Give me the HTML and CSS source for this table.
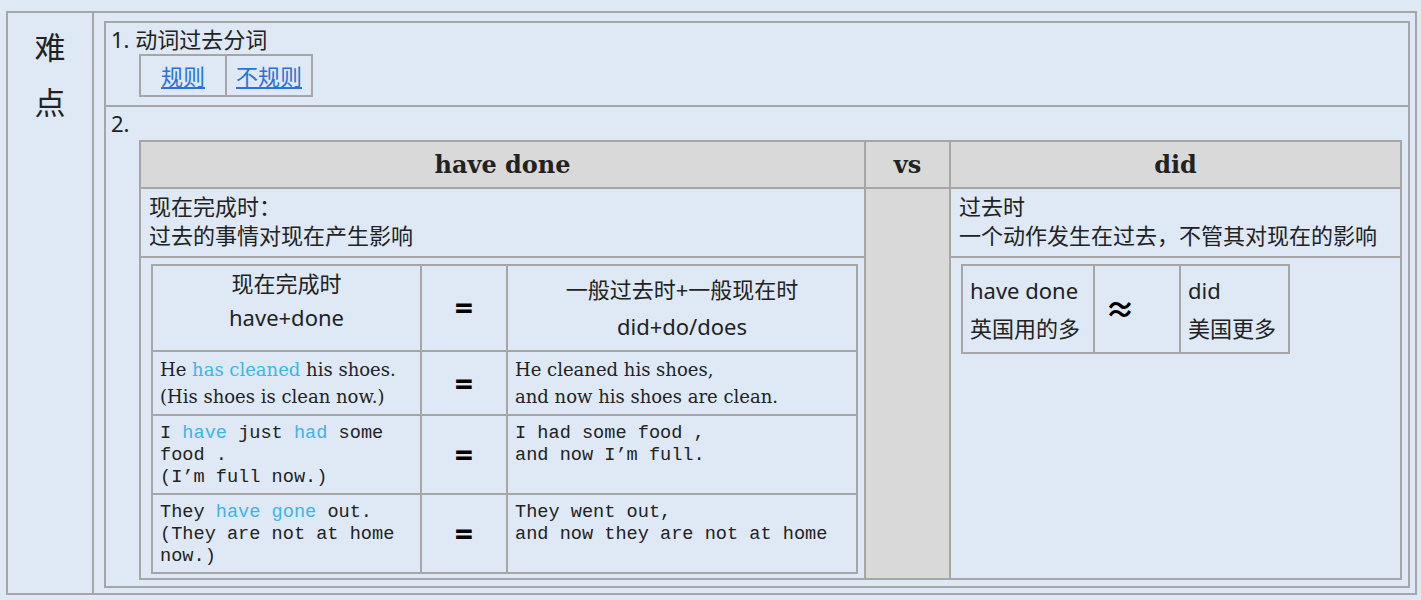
FILE: index.html
```html
<!DOCTYPE html>
<html lang="zh-CN">
<head>
  <meta charset="UTF-8">
  <meta name="viewport" content="width=device-width, initial-scale=1.0">
  <title>难点</title>
  <link rel="stylesheet" href="styles.css">
</head>
<body>
  <table class="outer">
    <tr>
      <td class="label">难<br>点</td>
      <td class="content">
        <table class="points">
          <tr class="point-one">
            <td>
              1. 动词过去分词
              <table class="links">
                <tr>
                  <td><a href="#">规则</a></td>
                  <td><a href="#">不规则</a></td>
                </tr>
              </table>
            </td>
          </tr>
          <tr class="point-two">
            <td>
              2.
              <table class="compare">
                <colgroup>
                  <col style="width: 725px">
                  <col style="width: 85px">
                  <col style="width: 451px">
                </colgroup>
                <tr class="head">
                  <th>have done</th>
                  <th>vs</th>
                  <th>did</th>
                </tr>
                <tr class="desc">
                  <td>现在完成时：<br>过去的事情对现在产生影响</td>
                  <td class="gap" rowspan="2"></td>
                  <td>过去时<br>一个动作发生在过去，不管其对现在的影响</td>
                </tr>
                <tr class="detail">
                  <td>
                    <table class="examples">
                      <colgroup>
                        <col style="width: 269px">
                        <col style="width: 86px">
                        <col style="width: 350px">
                      </colgroup>
                      <tr class="formula">
                        <td class="left-formula">现在完成时<br>have+done</td>
                        <td class="eq">=</td>
                        <td class="right-formula">一般过去时+一般现在时<br>did+do/does</td>
                      </tr>
                      <tr class="serif-row">
                        <td>He <span class="hl">has cleaned</span> his shoes.<br>(His shoes is clean now.)</td>
                        <td class="eq">=</td>
                        <td>He cleaned his shoes,<br>and now his shoes are clean.</td>
                      </tr>
                      <tr class="mono-row">
                        <td>I <span class="hl">have</span> just <span class="hl">had</span> some food .<br>(I’m full now.)</td>
                        <td class="eq">=</td>
                        <td>I had some food ,<br>and now I’m full.</td>
                      </tr>
                      <tr class="mono-row">
                        <td>They <span class="hl">have gone</span> out.<br>(They are not at home now.)</td>
                        <td class="eq">=</td>
                        <td>They went out,<br>and now they are not at home</td>
                      </tr>
                    </table>
                  </td>
                  <td>
                    <table class="usage">
                      <colgroup>
                        <col style="width: 132px">
                        <col style="width: 86px">
                        <col style="width: 109px">
                      </colgroup>
                      <tr>
                        <td>have done<br>英国用的多</td>
                        <td class="approx">≈</td>
                        <td>did<br>美国更多</td>
                      </tr>
                    </table>
                  </td>
                </tr>
              </table>
            </td>
          </tr>
        </table>
      </td>
    </tr>
  </table>
</body>
</html>
```

FILE: styles.css
```css
* {
  box-sizing: border-box;
}

body {
  margin: 0;
  background: #dee9f5;
  font-family: "Noto Sans", "Noto Sans CJK SC", sans-serif;
  font-size: 22px;
  color: #222;
}

table {
  border-collapse: collapse;
}

td, th {
  border: 2px solid #a6a6a6;
  padding: 0;
}

.outer {
  margin: 11px 0 0 6px;
  width: 1411px;
}

.label {
  width: 86px;
  vertical-align: top;
  text-align: center;
  font-size: 31px;
  line-height: 55px;
  padding-top: 7px;
}

.content {
  vertical-align: top;
  padding: 8px 5px 5px 10px;
}

.points {
  width: 100%;
}

.points > tbody > tr > td {
  vertical-align: top;
  padding: 4px 5px 7px;
  line-height: 24px;
}

.point-one {
  height: 84px;
}

.point-two > td {
  padding-top: 3px !important;
  padding-bottom: 6px !important;
  line-height: 26px !important;
}

/* 规则 / 不规则 */
.links {
  margin: 3px 0 0 28px;
}

.links td {
  width: 86px;
  height: 41px;
  text-align: center;
  vertical-align: middle;
}

.links a {
  color: #2a72d8;
}

/* 对比表 */
.compare {
  margin: 4px 0 0 28px;
  width: 1261px;
  table-layout: fixed;
}

.compare th {
  background: #d9d9d9;
  height: 47px;
  font-family: "DejaVu Serif", serif;
  font-size: 24px;
  font-weight: bold;
  line-height: 30px;
}

.desc td {
  height: 69px;
  padding: 2px 8px 6px;
  line-height: 29px;
  vertical-align: middle;
}

.compare .gap {
  background: #d9d9d9;
}

.detail > td {
  vertical-align: top;
  padding: 6px 8px 4px 10px;
}

.examples {
  width: 705px;
  table-layout: fixed;
}

.examples td {
  padding: 4px 7px;
  vertical-align: middle;
}

.formula {
  height: 86px;
}

.formula td {
  text-align: center;
}

.left-formula {
  vertical-align: top !important;
  line-height: 34px;
  padding-top: 0 !important;
}

.right-formula {
  line-height: 37px;
}

.serif-row {
  height: 60px;
  font-family: "DejaVu Serif", serif;
  font-size: 18px;
  line-height: 27px;
}

.mono-row {
  height: 77px;
  font-family: "Liberation Mono", monospace;
  font-size: 18.6px;
  line-height: 22px;
}

.mono-row td {
  vertical-align: top !important;
  padding-top: 7px !important;
}

.examples .eq {
  text-align: center;
  vertical-align: middle !important;
  font-family: "Noto Sans", sans-serif;
  font-size: 32px;
  font-weight: bold;
  color: #000;
  padding: 0 !important;
}

.hl {
  color: #3db4ea;
}

/* 英美用法 */
.usage {
  width: 327px;
  table-layout: fixed;
}

.usage td {
  height: 86px;
  padding: 5px 7px;
  line-height: 38px;
  vertical-align: middle;
}

.usage .approx {
  font-size: 30px;
  font-weight: bold;
  color: #000;
  padding-left: 10px;
}
```
